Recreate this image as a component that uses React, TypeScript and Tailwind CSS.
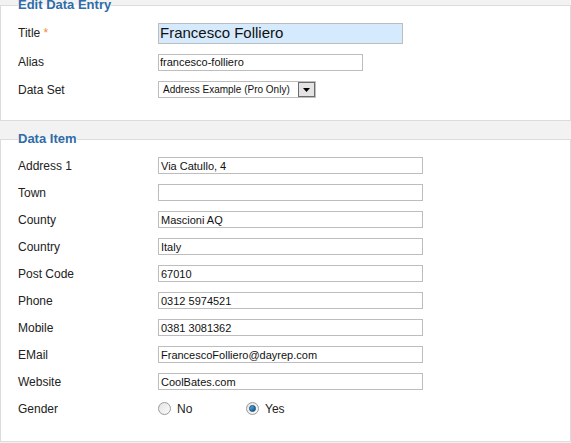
import React, { useState } from "react";

const font = { fontFamily: '"Liberation Sans", Arial, sans-serif' };

type Field = { label: string; value: string };

const items: Field[] = [
    { label: "Address 1", value: "Via Catullo, 4" },
    { label: "Town", value: "" },
    { label: "County", value: "Mascioni AQ" },
    { label: "Country", value: "Italy" },
    { label: "Post Code", value: "67010" },
    { label: "Phone", value: "0312 5974521" },
    { label: "Mobile", value: "0381 3081362" },
    { label: "EMail", value: "FrancescoFolliero@dayrep.com" },
    { label: "Website", value: "CoolBates.com" },
];

const Radio = ({ checked, label, onClick }: { checked: boolean; label: string; onClick: () => void }) => (
    <button type="button" onClick={onClick} className="flex items-center gap-[6px] outline-none">
        <span className="w-[13px] h-[13px] rounded-full border border-[#9a9a9a] bg-gradient-to-br from-[#e4e4e4] to-[#fbfbfb] flex items-center justify-center">
            {checked && (
                <span className="w-[7px] h-[7px] rounded-full bg-gradient-to-br from-[#5fb6ea] to-[#0b4f86] border border-[#134a76]" />
            )}
        </span>
        <span className="text-[12px] text-[#222]">{label}</span>
    </button>
);

const App = () => {
    const [values, setValues] = useState(items.map((i) => i.value));
    const [gender, setGender] = useState("yes");

    return (
        <div className="min-h-[443px] bg-[#f2f2f2] overflow-hidden" style={font}>
            <fieldset className="-mt-[3px] border border-[#dcdcdc] bg-white pl-[17px] pr-4 pt-[5px] pb-[17px]">
                <legend className="text-[13px] leading-[16px] font-bold text-[#2f6ca8]">Edit Data Entry</legend>
                <div className="flex items-center h-[30px]">
                    <label className="w-[140px] text-[12px] text-[#222]">
                        Title <span className="text-[#f28a35]">*</span>
                    </label>
                    <input
                        className="w-[245px] h-[21px] border border-[#bdbdbd] bg-[#d5eafd] px-[1px] text-[15px] text-[#111] outline-none"
                        defaultValue="Francesco Folliero"
                    />
                </div>
                <div className="flex items-center h-[28px]">
                    <label className="w-[140px] text-[12px] text-[#222]">Alias</label>
                    <input
                        className="w-[205px] h-[17px] border border-[#bdbdbd] bg-white px-[1px] text-[11px] text-[#111] outline-none"
                        defaultValue="francesco-folliero"
                    />
                </div>
                <div className="flex items-center h-[27px]">
                    <label className="w-[140px] text-[12px] text-[#222]">Data Set</label>
                    <div className="flex items-center w-[158px] h-[17px] border border-[#bdbdbd] bg-white">
                        <span className="flex-1 pl-[4px] text-[10px] text-[#111] leading-none whitespace-nowrap">
                            Address Example (Pro Only)
                        </span>
                        <span className="w-[17px] h-[15px] shrink-0 border border-[#6b6b6b] bg-[#e3e3e3] flex items-center justify-center">
                            <svg width="7" height="4" viewBox="0 0 7 4">
                                <path d="M0 0h7L3.5 4z" fill="#000" />
                            </svg>
                        </span>
                    </div>
                </div>
            </fieldset>

            <fieldset className="mt-[10px] border border-[#dcdcdc] bg-white pl-[17px] pr-4 pt-[5px] pb-[19px]">
                <legend className="text-[13px] leading-[16px] font-bold text-[#2f6ca8]">Data Item</legend>
                {items.map((item, i) => (
                    <div key={item.label} className="flex items-center h-[27px]">
                        <label className="w-[140px] text-[12px] text-[#222]">{item.label}</label>
                        <input
                            className="w-[265px] h-[17px] border border-[#bdbdbd] bg-white px-[2px] text-[11px] text-[#111] outline-none"
                            value={values[i]}
                            onChange={(e) => {
                                const next = [...values];
                                next[i] = e.target.value;
                                setValues(next);
                            }}
                        />
                    </div>
                ))}
                <div className="flex items-center h-[27px]">
                    <label className="w-[140px] text-[12px] text-[#222]">Gender</label>
                    <div className="w-[88px]">
                        <Radio checked={gender === "no"} label="No" onClick={() => setGender("no")} />
                    </div>
                    <Radio checked={gender === "yes"} label="Yes" onClick={() => setGender("yes")} />
                </div>
            </fieldset>
        </div>
    );
};

export default App;
